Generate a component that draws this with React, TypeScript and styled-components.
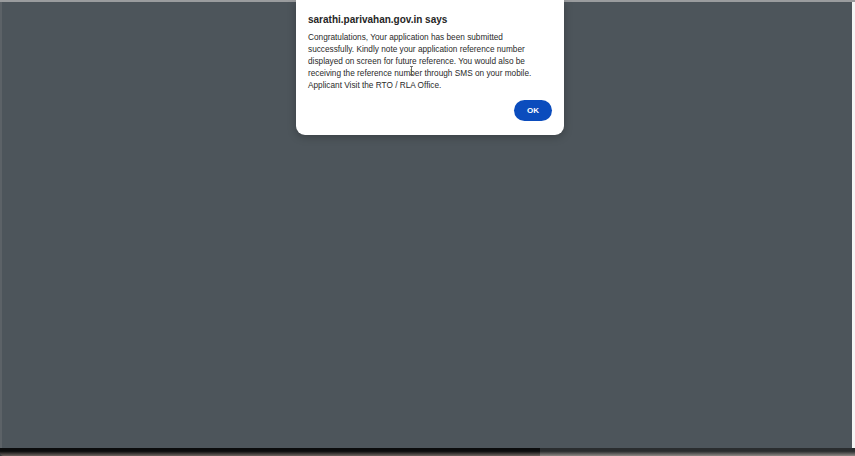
import React from "react";
import styled, { createGlobalStyle } from "styled-components";

const Global = createGlobalStyle`
  html, body {
    margin: 0;
    padding: 0;
    width: 855px;
    height: 456px;
    overflow: hidden;
    background: #f2f2f2;
  }
  * { box-sizing: border-box; }
`;

const Screen = styled.div`
  width: 855px;
  height: 456px;
  display: flex;
  flex-direction: column;
  background: #f4f4f4;
  border-top: 2px solid #9a9c9e;
`;

const Frame = styled.div`
  flex: 1;
  display: flex;
  padding-right: 3px;
`;

const Overlay = styled.div`
  position: relative;
  flex: 1;
  background: #4d555b;
  border-left: 2px solid #5c6267;
`;

const BottomEdge = styled.div`
  height: 8px;
  display: flex;
  background: #3a3e40;
`;

const EdgeDark = styled.div`
  width: 540px;
  background: linear-gradient(180deg, #0b0c0d 0%, #0b0c0d 40%, #6f6561 100%);
  border-bottom-left-radius: 4px;
`;

const EdgeLight = styled.div`
  flex: 1;
  background: linear-gradient(180deg, #2a2d2f 0%, #2a2d2f 40%, #8f8a86 100%);
`;

const Dialog = styled.div`
  position: absolute;
  left: 294px;
  top: -2px;
  width: 268px;
  height: 135px;
  background: #ffffff;
  border-radius: 0 0 9px 9px;
  box-shadow: 0 2px 8px rgba(0, 0, 0, 0.25);
  padding: 13px 12px 0 12px;
  font-family: "Liberation Sans", Arial, sans-serif;
  color: #1e1e1e;
  display: flex;
  flex-direction: column;
`;

const Title = styled.div`
  font-size: 10px;
  font-weight: 700;
  color: #262626;
  line-height: 13px;
`;

const Message = styled.div`
  margin-top: 6px;
  font-size: 8.25px;
  line-height: 12px;
  color: #2a2a2a;
`;

const Actions = styled.div`
  display: flex;
  justify-content: flex-end;
  margin-top: 8px;
`;

const OkButton = styled.button`
  width: 38px;
  height: 21px;
  border: none;
  border-radius: 11px;
  background: #0b4cbd;
  color: #ffffff;
  font-family: "Liberation Sans", Arial, sans-serif;
  font-size: 8px;
  font-weight: 700;
  padding: 0;
  cursor: pointer;
`;

const Cursor = styled.svg`
  position: absolute;
  left: 113px;
  top: 66px;
`;

export default function App() {
  return (
    <>
      <Global />
      <Screen>
        <Frame>
          <Overlay>
            <Dialog>
              <Title>sarathi.parivahan.gov.in says</Title>
              <Message>
                Congratulations, Your application has been submitted
                <br />
                successfully. Kindly note your application reference number
                <br />
                displayed on screen for future reference. You would also be
                <br />
                receiving the reference number through SMS on your mobile.
                <br />
                Applicant Visit the RTO / RLA Office.
              </Message>
              <Actions>
                <OkButton>OK</OkButton>
              </Actions>
              <Cursor width="5" height="9" viewBox="0 0 5 9">
                <path d="M1 0.5h3M2.5 0.5v8M1 8.5h3" stroke="#555" strokeWidth="0.8" fill="none" />
              </Cursor>
            </Dialog>
          </Overlay>
        </Frame>
        <BottomEdge>
          <EdgeDark />
          <EdgeLight />
        </BottomEdge>
      </Screen>
    </>
  );
}
